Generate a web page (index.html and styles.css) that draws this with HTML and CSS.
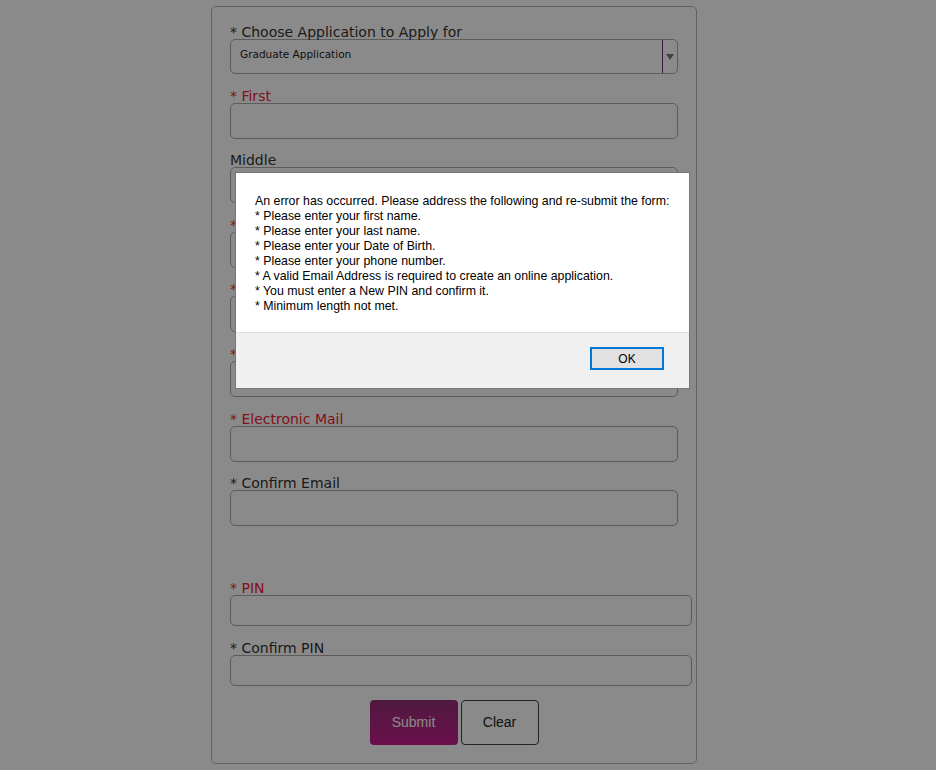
FILE: index.html
```html
<!DOCTYPE html>
<html lang="en">
<head>
    <meta charset="UTF-8">
    <meta name="viewport" content="width=device-width, initial-scale=1.0">
    <title>Online Application</title>
    <link rel="stylesheet" href="styles.css">
</head>
<body>
    <form class="app-form">
        <div class="field">
            <label class="lbl">* Choose Application to Apply for</label>
            <div class="pick">
                <span class="pick-text">Graduate Application</span>
                <span class="pick-arrow"></span>
            </div>
        </div>
        <div class="field">
            <label class="lbl err">* First</label>
            <input class="box" type="text">
        </div>
        <div class="field">
            <label class="lbl">Middle</label>
            <input class="box" type="text">
        </div>
        <div class="field">
            <label class="lbl err">* Last</label>
            <input class="box" type="text">
        </div>
        <div class="field">
            <label class="lbl err">* Date of Birth</label>
            <input class="box" type="text">
        </div>
        <div class="field">
            <label class="lbl err">* Phone</label>
            <input class="box" type="text">
        </div>
        <div class="field">
            <label class="lbl err">* Electronic Mail</label>
            <input class="box" type="text">
        </div>
        <div class="field">
            <label class="lbl">* Confirm Email</label>
            <input class="box" type="text">
        </div>
        <div class="spacer"></div>
        <div class="field">
            <label class="lbl err">* PIN</label>
            <input class="box pin" type="password">
        </div>
        <div class="field">
            <label class="lbl">* Confirm PIN</label>
            <input class="box pin" type="password">
        </div>
        <div class="btns">
            <button type="button" class="btn-submit">Submit</button>
            <button type="button" class="btn-clear">Clear</button>
        </div>
    </form>

    <div class="shade"></div>
    <div class="alert">
        <div class="alert-body">
            An error has occurred. Please address the following and re-submit the form:<br>
            * Please enter your first name.<br>
            * Please enter your last name.<br>
            * Please enter your Date of Birth.<br>
            * Please enter your phone number.<br>
            * A valid Email Address is required to create an online application.<br>
            * You must enter a New PIN and confirm it.<br>
            * Minimum length not met.
        </div>
        <div class="alert-foot">
            <button type="button" class="ok">OK</button>
        </div>
    </div>
</body>
</html>
```

FILE: styles.css
```css
body{
    margin: 0;
    background-color: white;
    font-family: "DejaVu Sans", sans-serif;
    color: #333;
}
.app-form{
    width: 448px;
    margin: 6px 0 0 211px;
    padding: 17px 18px 18px 18px;
    border: 1px solid #b4b4b4;
    border-radius: 5px;
    background-color: white;
}
.field{
    margin-bottom: 13.6px;
}
.lbl{
    display: block;
    height: 15px;
    line-height: 17px;
    font-size: 14px;
    white-space: nowrap;
}
.err{
    color: #f01c30;
}
.box{
    display: block;
    box-sizing: border-box;
    width: 448px;
    height: 36px;
    margin: 0;
    border: 1px solid #aaa;
    border-radius: 5px;
    background-color: white;
}
.pin{
    width: 462px;
    height: 31px;
}
.pick{
    display: flex;
    box-sizing: border-box;
    width: 448px;
    height: 35px;
    border: 1px solid #aaa;
    border-radius: 5px;
}
.pick-text{
    flex: 1;
    padding: 8px 0 0 9px;
    font-size: 10.5px;
    color: #222;
}
.pick-arrow{
    width: 14px;
    border-left: 1px solid #7c2a62;
    position: relative;
}
.pick-arrow::after{
    content: "";
    position: absolute;
    left: 3px;
    top: 14px;
    border-left: 4px solid transparent;
    border-right: 4px solid transparent;
    border-top: 6px solid #777;
}
.spacer{
    height: 40.6px;
}
.btns{
    display: flex;
    justify-content: center;
    gap: 3px;
}
.btn-submit{
    width: 88px;
    height: 45px;
    border: none;
    border-radius: 4px;
    background: linear-gradient(#923075, #c71c8e);
    color: #fff;
    font-family: "Liberation Sans", Arial, sans-serif;
    font-size: 14px;
}
.btn-clear{
    width: 78px;
    height: 45px;
    border: 1px solid #444;
    border-radius: 4px;
    background-color: white;
    color: #222;
    font-family: "Liberation Sans", Arial, sans-serif;
    font-size: 14px;
}
.shade{
    position: fixed;
    left: 0;
    top: 0;
    right: 0;
    bottom: 0;
    background-color: rgba(0,0,0,0.46);
}
.alert{
    position: absolute;
    left: 235px;
    top: 172px;
    width: 455px;
    box-sizing: border-box;
    border: 1px solid #777;
    background-color: white;
    font-family: "Liberation Sans", Arial, sans-serif;
    font-size: 12.35px;
    color: #000;
}
.alert-body{
    padding: 21px 10px 18px 19px;
    line-height: 15px;
    white-space: nowrap;
}
.alert-foot{
    height: 56px;
    box-sizing: border-box;
    border-top: 1px solid #dfdfdf;
    background-color: #f0f0f0;
    padding: 14px 25px 0 0;
    text-align: right;
}
.ok{
    width: 74px;
    height: 23px;
    border: 2px solid #0078d7;
    background-color: #e1e1e1;
    font-family: "Liberation Sans", Arial, sans-serif;
    font-size: 12px;
    color: #000;
    padding: 0;
}
```
